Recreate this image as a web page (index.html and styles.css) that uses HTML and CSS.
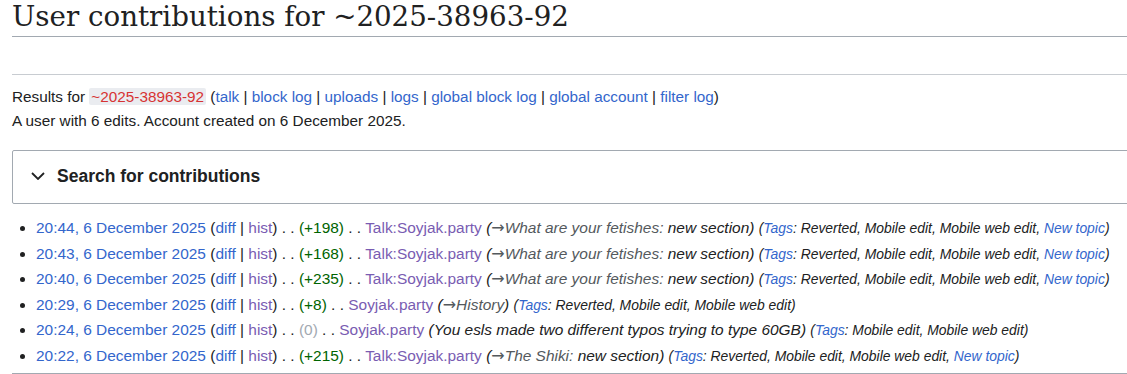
FILE: index.html
```html
<!DOCTYPE html>
<html lang="en">
<head>
    <meta charset="UTF-8">
    <title>User contributions for ~2025-38963-92</title>
    <link rel="stylesheet" href="styles.css">
</head>
<body>
    <div class="content">
        <h1 class="page-title">User contributions for ~2025-38963-92</h1>
        <div class="toolbar"></div>

        <div class="sub">
            <p>Results for <a class="new user-link" href="#">~2025-38963-92</a> (<a href="#">talk</a> | <a href="#">block log</a> | <a href="#">uploads</a> | <a href="#">logs</a> | <a href="#">global block log</a> | <a href="#">global account</a> | <a href="#">filter log</a>)</p>
            <p>A user with 6 edits. Account created on 6 December 2025.</p>
        </div>

        <div class="search-box">
            <svg class="chevron" width="14" height="8" viewBox="0 0 14 8"><path d="M1 1 L7 7 L13 1" fill="none" stroke="#202122" stroke-width="1.8"/></svg>
            <span>Search for contributions</span>
        </div>

        <ul class="contribs">
            <li><a href="#">20:44, 6 December 2025</a> (<a href="#">diff</a> | <a class="visited" href="#">hist</a>) . . <span class="plus">(+198)</span> . . <a class="visited" href="#">Talk:Soyjak.party</a> <span class="comment">(<span class="auto"><span class="arrow">→</span>What are your fetishes:</span> new section)</span> <span class="tags">(<a href="#">Tags</a>: Reverted, Mobile edit, Mobile web edit, <a href="#">New topic</a>)</span></li>
            <li><a href="#">20:43, 6 December 2025</a> (<a href="#">diff</a> | <a class="visited" href="#">hist</a>) . . <span class="plus">(+168)</span> . . <a class="visited" href="#">Talk:Soyjak.party</a> <span class="comment">(<span class="auto"><span class="arrow">→</span>What are your fetishes:</span> new section)</span> <span class="tags">(<a href="#">Tags</a>: Reverted, Mobile edit, Mobile web edit, <a href="#">New topic</a>)</span></li>
            <li><a href="#">20:40, 6 December 2025</a> (<a href="#">diff</a> | <a class="visited" href="#">hist</a>) . . <span class="plus">(+235)</span> . . <a class="visited" href="#">Talk:Soyjak.party</a> <span class="comment">(<span class="auto"><span class="arrow">→</span>What are your fetishes:</span> new section)</span> <span class="tags">(<a href="#">Tags</a>: Reverted, Mobile edit, Mobile web edit, <a href="#">New topic</a>)</span></li>
            <li><a href="#">20:29, 6 December 2025</a> (<a href="#">diff</a> | <a class="visited" href="#">hist</a>) . . <span class="plus">(+8)</span> . . <a class="visited" href="#">Soyjak.party</a> <span class="comment">(<span class="auto"><span class="arrow">→</span>History</span>)</span> <span class="tags">(<a href="#">Tags</a>: Reverted, Mobile edit, Mobile web edit)</span></li>
            <li><a href="#">20:24, 6 December 2025</a> (<a href="#">diff</a> | <a class="visited" href="#">hist</a>) . . <span class="null">(0)</span> . . <a class="visited" href="#">Soyjak.party</a> <span class="comment">(You esls made two different typos trying to type 60GB)</span> <span class="tags">(<a href="#">Tags</a>: Mobile edit, Mobile web edit)</span></li>
            <li><a href="#">20:22, 6 December 2025</a> (<a href="#">diff</a> | <a class="visited" href="#">hist</a>) . . <span class="plus">(+215)</span> . . <a class="visited" href="#">Talk:Soyjak.party</a> <span class="comment">(<span class="auto"><span class="arrow">→</span>The Shiki:</span> new section)</span> <span class="tags">(<a href="#">Tags</a>: Reverted, Mobile edit, Mobile web edit, <a href="#">New topic</a>)</span></li>
        </ul>
    </div>
</body>
</html>
```
FILE: styles.css
```css
html, body {
    overflow: hidden;
}
body {
    margin: 0;
    background: #fff;
    color: #202122;
    font-family: "Liberation Sans", Arial, sans-serif;
    font-size: 15.3px;
}
a {
    color: #3366cc;
    text-decoration: none;
}
a.visited {
    color: #795cb2;
}
.content {
    padding-left: 12px;
    margin-right: -30px;
}
.page-title {
    margin: 0;
    padding-bottom: 3px;
    font-family: "DejaVu Serif", "Liberation Serif", serif;
    font-weight: normal;
    font-size: 27.7px;
    line-height: 33px;
    border-bottom: 1px solid #a2a9b1;
}
.toolbar {
    height: 37px;
    border-bottom: 1px solid #c8ccd1;
}
.sub {
    margin-top: 10px;
    line-height: 24px;
}
.sub p {
    margin: 0;
}
.user-link {
    color: #d73333;
    background: #eaecf0;
    border-radius: 2px;
    padding: 0 2px;
}
.search-box {
    margin-top: 17px;
    height: 50px;
    padding-bottom: 2px;
    border: 1px solid #a2a9b1;
    border-radius: 2px;
    display: flex;
    align-items: center;
    gap: 12px;
    padding-left: 18px;
    font-weight: bold;
    font-size: 17.5px;
}
.contribs {
    margin: 11px 0 0;
    padding: 0 0 4px 24px;
    line-height: 25.6px;
    font-size: 15.45px;
    border-bottom: 1px solid #a2a9b1;
    white-space: nowrap;
}
.contribs li {
    height: 25.6px;
}
.plus {
    color: #006400;
}
.null {
    color: #a2a9b1;
}
.comment {
    font-style: italic;
}
.auto {
    color: #54595d;
}
.arrow {
    font-family: "DejaVu Sans", sans-serif;
    font-style: normal;
    font-size: 16px;
}
.tags {
    font-style: italic;
    font-size: 13.9px;
}
```
